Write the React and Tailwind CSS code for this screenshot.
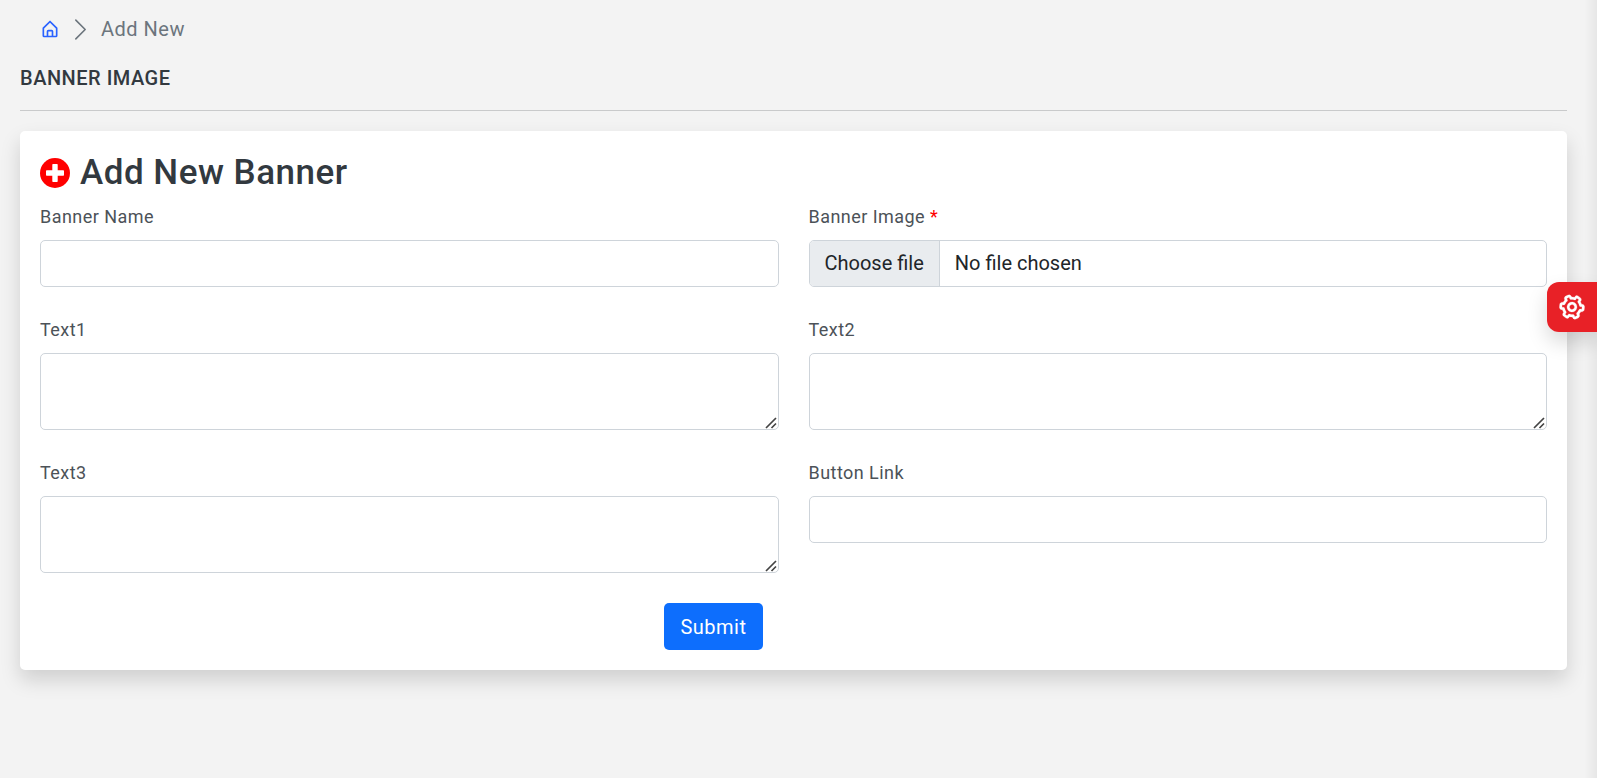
import { useState } from "react";
import { BiHomeAlt, BiCog } from "react-icons/bi";
import { BsChevronRight } from "react-icons/bs";

const control =
  "block w-full rounded-[5px] border border-[#ced4da] bg-white text-xl leading-[30px] tracking-normal text-[#212529] outline-none focus:border-[#86b7fe]";

function PlusCircle({ className }) {
  return (
    <svg aria-hidden="true" viewBox="0 0 30 30" className={className}>
      <circle cx="15" cy="15" r="15" fill="currentColor" />
      <rect x="6" y="12.300" width="18" height="5.400" rx="0.700" fill="#fff" />
      <rect x="12.300" y="6" width="5.400" height="18" rx="0.700" fill="#fff" />
    </svg>
  );
}

function Field({ id, label, required, children }) {
  return (
    <div>
      <label
        htmlFor={id}
        className="mb-[10px] block text-lg leading-[26px] tracking-wide text-[#4c5258]"
      >
        {label}
        {required && <span className="text-[#f00]"> *</span>}
      </label>
      {children}
    </div>
  );
}

function TextInput({ id }) {
  return <input id={id} name={id} type="text" className={`${control} h-[47px] px-[15px]`} />;
}

function TextArea({ id }) {
  return (
    <div className="relative">
      <textarea
        id={id}
        name={id}
        className={`${control} h-[77px] resize-none px-[15px] py-2`}
      />
      <svg
        aria-hidden="true"
        viewBox="0 0 12 12"
        className="pointer-events-none absolute right-[2px] bottom-[1px] size-3 text-[#444]"
        fill="none"
        stroke="currentColor"
        strokeWidth="1.7"
      >
        <path d="M1 11 11 1M6.500 11 11 6.500" />
      </svg>
    </div>
  );
}

function FileInput({ id }) {
  const [fileName, setFileName] = useState("No file chosen");
  return (
    <div className="relative">
      <input
        id={id}
        name={id}
        type="file"
        className="peer sr-only"
        onChange={(e) => setFileName(e.target.files[0]?.name ?? "No file chosen")}
      />
      <label
        htmlFor={id}
        className="flex h-[47px] w-full overflow-hidden rounded-[5px] border border-[#ced4da] bg-white text-xl leading-[44px] tracking-normal text-[#212529] peer-focus:border-[#86b7fe]"
      >
        <span className="border-r border-[#ced4da] bg-[#e9ecef] px-[15px]">Choose file</span>
        <span className="px-[15px]">{fileName}</span>
      </label>
    </div>
  );
}

export default function App() {
  return (
    <div className="min-h-screen bg-[#f3f3f3] font-['Roboto',sans-serif] text-xl tracking-wide text-[#32393f]">
      <main className="pr-[30px] pl-5">
        <nav aria-label="Breadcrumb" className="px-5 pt-[14px]">
          <ol className="flex h-[30px] items-center leading-[30px] text-[#6c757d]">
            <li>
              <a href="#home" aria-label="Home" className="block text-[#2962ff]">
                <BiHomeAlt className="size-5" />
              </a>
            </li>
            <li aria-hidden="true" className="px-2">
              <BsChevronRight className="size-[25px]" />
            </li>
            <li aria-current="page">Add New</li>
          </ol>
        </nav>

        <h1 className="mt-[22px] leading-6 font-medium uppercase">Banner Image</h1>
        <hr className="mt-5 mb-5 border-[#c9cacb]" />

        <section className="rounded-[5px] bg-white p-5 shadow-[0_10px_20px_rgba(0,0,0,0.15)]">
          <h2 className="mb-[9px] flex items-center gap-[10px] text-[35px] leading-[44px] font-medium">
            <PlusCircle className="size-[30px] text-[#f00]" />
            Add New Banner
          </h2>
          <form onSubmit={(e) => e.preventDefault()}>
            <div className="grid grid-cols-2 gap-[30px]">
              <Field id="banner-name" label="Banner Name">
                <TextInput id="banner-name" />
              </Field>
              <Field id="banner-image" label="Banner Image" required>
                <FileInput id="banner-image" />
              </Field>
              <Field id="text1" label="Text1">
                <TextArea id="text1" />
              </Field>
              <Field id="text2" label="Text2">
                <TextArea id="text2" />
              </Field>
              <Field id="text3" label="Text3">
                <TextArea id="text3" />
              </Field>
              <Field id="button-link" label="Button Link">
                <TextInput id="button-link" />
              </Field>
              <div className="flex justify-end pr-4">
                <button
                  type="submit"
                  className="h-[47px] rounded-[5px] bg-[#0d6efd] px-4 leading-[30px] tracking-wide text-white"
                >
                  Submit
                </button>
              </div>
            </div>
          </form>
        </section>
      </main>

      <div className="pointer-events-none fixed inset-y-0 right-0 w-3 bg-linear-to-r from-transparent to-black/5" />
      <button
        type="button"
        aria-label="Settings"
        className="fixed top-[282px] right-0 flex size-[50px] items-center justify-center rounded-l-xl bg-[#e82127] text-white shadow-[0_10px_20px_rgba(0,0,0,0.15)]"
      >
        <BiCog className="size-[30px] rotate-[96deg] stroke-current" strokeWidth="0.2" />
      </button>
    </div>
  );
}
